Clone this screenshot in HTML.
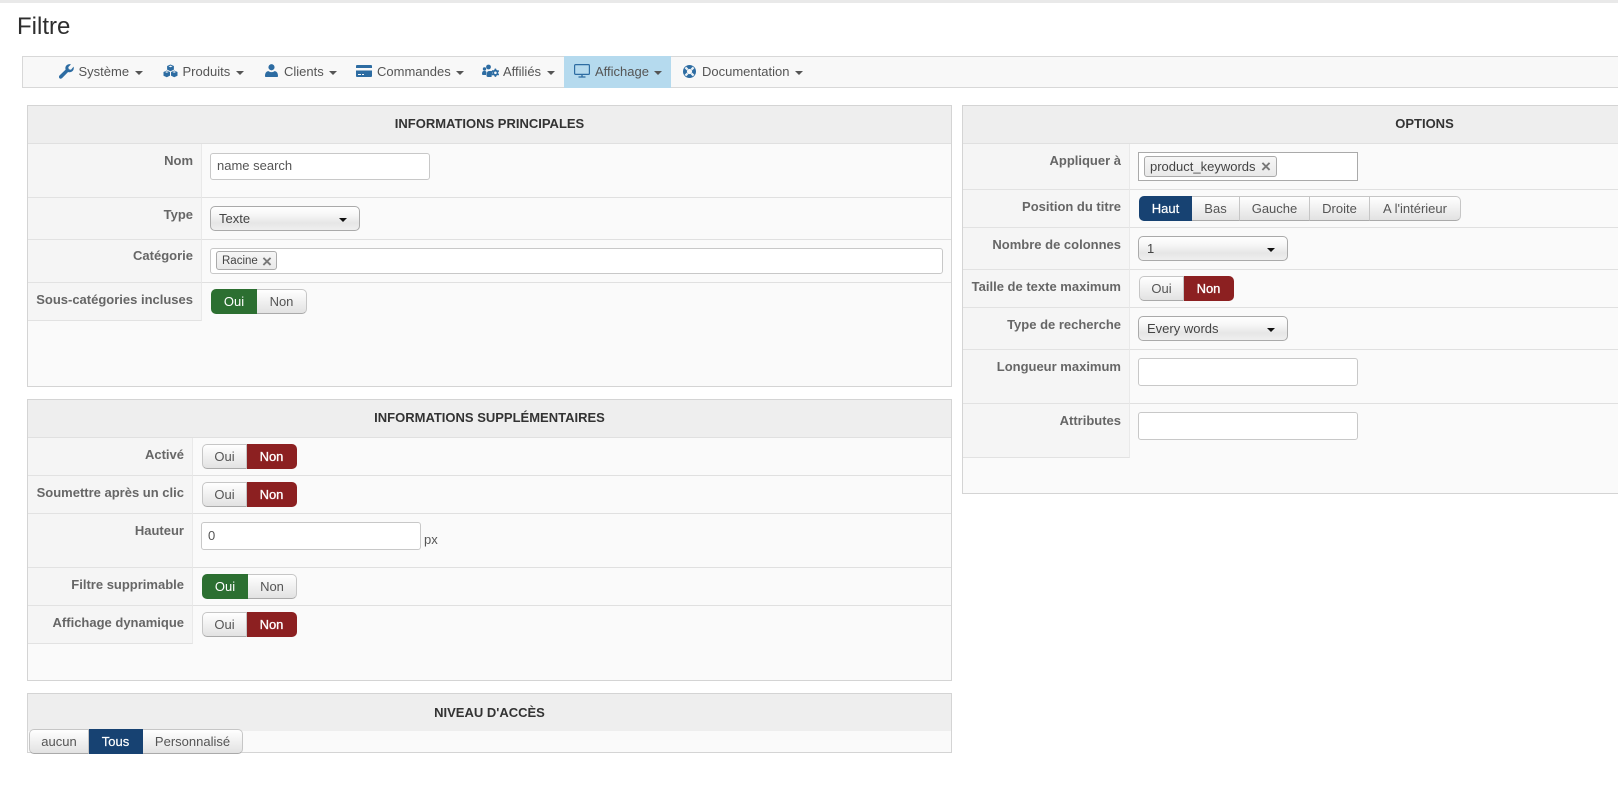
<!DOCTYPE html>
<html lang="fr"><head><meta charset="utf-8"><title>Filtre</title>
<style>
*{box-sizing:border-box}
html,body{margin:0;padding:0;width:1618px;height:790px;overflow:hidden;background:#fff}
body{position:relative;font-family:"Liberation Sans",Arial,sans-serif;font-size:13px;color:#555}
.panel{background:#fafafa;border:1px solid #d4d4d4;overflow:hidden}
.head{position:absolute;background:#eeeeee;border-bottom:1px solid #e0e0e0;font-weight:bold;font-size:13px;color:#333;text-align:center;left:0;right:0;top:0}
.lab{position:absolute;background:#f5f5f5;border-right:1px solid #e9e9e9;border-bottom:1px solid #e2e2e2}
.line{position:absolute;height:1px;background:#e0e0e0}
.l{position:absolute;font-weight:bold;color:#666;text-align:right;font-size:13px;line-height:16px;white-space:nowrap}
.inp{position:absolute;background:#fff;border:1px solid #c8c8c8;border-radius:3px;color:#555;line-height:26px;padding-left:6px;font-size:13px}
.sel{position:absolute;border:1px solid #aaa;border-radius:5px;background:linear-gradient(#fff 0,#f6f6f6 35%,#e6e6e6 70%,#efefef 100%);color:#444;height:25px;line-height:23px;padding-left:8px;font-size:13px}
.sel i{position:absolute;right:12px;top:11px;width:0;height:0;border:4px solid transparent;border-top-color:#111;border-bottom:0}
.b{position:absolute;height:25px;line-height:23px;text-align:center;font-size:13px;color:#555;background:linear-gradient(#fff,#e2e2e2);border:1px solid #c6c6c6;border-bottom-color:#aaa;border-left-width:0}
.b.f{border-left-width:1px;border-radius:5px 0 0 5px}
.b.e{border-radius:0 5px 5px 0}
.g{background:#2c6f31;border-color:#2c6f31;color:#fff}
.r{background:#8c2021;border-color:#8c2021;color:#fff;-webkit-text-stroke:.3px #fff}
.n{background:#174272;border-color:#174272;color:#fff;-webkit-text-stroke:.2px #fff}
.tag{position:absolute;border:1px solid #aaa;border-radius:3px;background:linear-gradient(#f6f6f6,#e9e9e9);color:#444;white-space:nowrap}
.nav{position:absolute;font-size:13px;color:#555;line-height:16px;top:64px;white-space:nowrap}
.c{position:absolute;top:71px;width:0;height:0;border:4px solid transparent;border-top-color:#555;border-bottom:0}
svg.ic{position:absolute;fill:#2d6ca2}
</style></head><body>
<div style="position:absolute;left:0;top:0;width:1618px;height:3px;background:#e9e9e9"></div>
<div style="position:absolute;left:17px;top:13px;font-size:24px;line-height:28px;color:#2e2e2e">Filtre</div>

<!-- NAV -->
<div style="position:absolute;left:22px;top:56px;width:1600px;height:32px;background:#f8f8f8;border:1px solid #d8d8d8"></div>
<div style="position:absolute;left:564px;top:56px;width:107px;height:32px;background:#b5daee"></div>

<svg class="ic" style="left:59px;top:63px" width="15" height="16" viewBox="0 0 15 16"><path d="M14.6 3.6c.5 1.8 0 3.6-1.3 4.7-1.2 1-2.8 1.2-4.2.7L3.2 15c-.9.9-2.1.9-2.8.1-.7-.8-.6-1.9.2-2.7l6-5.8c-.5-1.5-.2-3.1.9-4.2C8.600 1.300 10.400.8 12 1.400L9.300 4.100l.5 2.200 2.200.5z"/></svg>
<div class="nav" style="left:78.500px">Système</div><div class="c" style="left:135px"></div>

<svg class="ic" style="left:163px;top:64px" width="15" height="14" viewBox="0 0 15 14"><path d="M7.500 0.500l3.400 1.500v3.600L7.500 7.200 4.100 5.600V2zM3.800 6.500l3.200 1.500v3.600l-3.200 1.700L.5 11.700V8zM11.200 6.500l3.300 1.500v3.700l-3.300 1.600L8 11.600V8z"/><path fill="#f8f8f8" d="M5.500 2.400l2-.8 2 .8-2 .8zM2 8l1.800-.8 1.800.8-1.800.8zM9.400 8l1.800-.8 1.800.8-1.800.8z"/></svg>
<div class="nav" style="left:182.500px">Produits</div><div class="c" style="left:236px"></div>

<svg class="ic" style="left:265px;top:64px" width="13" height="13" viewBox="0 0 14 14"><circle cx="7" cy="3.500" r="3.300"/><path d="M1 14c-.7 0-1-.5-1-1.100C0 10 1.300 7.700 3.800 7.700c1 .8 2 1.100 3.200 1.100s2.200-.3 3.200-1.100c2.500 0 3.800 2.300 3.800 5.200 0 .6-.3 1.100-1 1.100z"/></svg>
<div class="nav" style="left:284px">Clients</div><div class="c" style="left:329px"></div>

<svg class="ic" style="left:356px;top:65px" width="16" height="12" viewBox="0 0 16 12"><path d="M1 0h14a1 1 0 0 1 1 1v2H0V1a1 1 0 0 1 1-1zM0 5.500h16V11a1 1 0 0 1-1 1H1a1 1 0 0 1-1-1zM2 9v1h3V9zM6 9v1h2V9z" fill-rule="evenodd"/></svg>
<div class="nav" style="left:377px">Commandes</div><div class="c" style="left:456px"></div>

<svg class="ic" style="left:482px;top:64px" width="17" height="14" viewBox="0 0 17 14"><circle cx="2.500" cy="5" r="1.700"/><circle cx="6.500" cy="3" r="2.400"/><path d="M0 10c0-2 .6-3 1.500-3h2l1 1L4 11H1c-.6 0-1-.4-1-1zM4.500 11.500c0-2.800 1-4.500 2.500-4.500h2c.6 0 1 .3 1.300.7L9.500 13H6c-1 0-1.500-.6-1.500-1.500z"/><path fill-rule="evenodd" d="M12.800 4.500l1.300.1.300 1.200 1.100.6 1.100-.3.500 1.300-.9.700v1.300l.9.800-.5 1.200-1.100-.3-1.100.6-.3 1.200h-1.300l-.4-1.200-1.100-.6-1.100.3-.6-1.200.9-.8V8.100l-.9-.7.6-1.300 1.100.3 1.100-.6zm.6 3a1.300 1.300 0 1 0 .01 2.600 1.300 1.300 0 0 0-.01-2.600z"/></svg>
<div class="nav" style="left:503px">Affiliés</div><div class="c" style="left:547px"></div>

<svg class="ic" style="left:574px;top:64px;fill:none;stroke:#2d6ca2" width="16" height="14" viewBox="0 0 16 14"><rect x=".6" y=".6" width="14.800" height="9.800" rx="1" stroke-width="1.200"/><path d="M8 10.500v2M4.500 13h7" stroke-width="1.300"/></svg>
<div class="nav" style="left:595px">Affichage</div><div class="c" style="left:654px"></div>

<svg class="ic" style="left:683px;top:65px" width="13" height="13" viewBox="0 0 14 14"><circle cx="7" cy="7" r="7"/><path stroke="#e8f0f6" stroke-width="2.400" d="M2.600 2.600l2.300 2.300M11.400 2.600L9.100 4.900M2.600 11.400l2.300-2.300M11.400 11.400L9.100 9.100"/><circle cx="7" cy="7" r="2.800" fill="#f8f8f8"/></svg>
<div class="nav" style="left:702px">Documentation</div><div class="c" style="left:795px"></div>

<!-- PANEL 1 -->
<div class="panel" style="position:absolute;left:27px;top:105px;width:925px;height:282px">
  <div class="head" style="height:38px;line-height:36px">INFORMATIONS PRINCIPALES</div>
</div>
<div class="lab" style="left:28px;top:144px;width:174px;height:54px"></div>
<div class="lab" style="left:28px;top:198px;width:174px;height:42px"></div>
<div class="lab" style="left:28px;top:240px;width:174px;height:43px"></div>
<div class="lab" style="left:28px;top:283px;width:174px;height:38px"></div>
<div class="line" style="left:202px;top:197px;width:749px"></div>
<div class="line" style="left:202px;top:239px;width:749px"></div>
<div class="line" style="left:202px;top:282px;width:749px"></div>
<div class="l" style="right:1425px;top:153px">Nom</div>
<div class="l" style="right:1425px;top:207px">Type</div>
<div class="l" style="right:1425px;top:248px">Catégorie</div>
<div class="l" style="right:1425px;top:292px">Sous-catégories incluses</div>
<div class="inp" style="left:210px;top:153px;width:220px;height:27px;line-height:24px">name search</div>
<div class="sel" style="left:210px;top:206px;width:150px">Texte<i></i></div>
<div class="inp" style="left:210px;top:248px;width:733px;height:26px"></div>
<div class="tag" style="left:216px;top:251px;width:61px;height:19px;font-size:11.500px;line-height:18px;padding-left:5px">Racine</div>
<div style="position:absolute;left:262px;top:252px;font-size:17px;line-height:19px;color:#777;font-weight:bold">×</div>
<div class="b f g" style="left:211px;top:289px;width:46px">Oui</div>
<div class="b e" style="left:257px;top:289px;width:50px">Non</div>

<!-- PANEL 2 -->
<div class="panel" style="position:absolute;left:27px;top:399px;width:925px;height:282px">
  <div class="head" style="height:38px;line-height:36px">INFORMATIONS SUPPLÉMENTAIRES</div>
</div>
<div class="lab" style="left:28px;top:438px;width:165px;height:38px"></div>
<div class="lab" style="left:28px;top:476px;width:165px;height:38px"></div>
<div class="lab" style="left:28px;top:514px;width:165px;height:54px"></div>
<div class="lab" style="left:28px;top:568px;width:165px;height:38px"></div>
<div class="lab" style="left:28px;top:606px;width:165px;height:38px"></div>
<div class="line" style="left:193px;top:475px;width:758px"></div>
<div class="line" style="left:193px;top:513px;width:758px"></div>
<div class="line" style="left:193px;top:567px;width:758px"></div>
<div class="line" style="left:193px;top:605px;width:758px"></div>
<div class="l" style="right:1434px;top:447px">Activé</div>
<div class="l" style="right:1434px;top:485px">Soumettre après un clic</div>
<div class="l" style="right:1434px;top:523px">Hauteur</div>
<div class="l" style="right:1434px;top:577px">Filtre supprimable</div>
<div class="l" style="right:1434px;top:615px">Affichage dynamique</div>
<div class="b f" style="left:202px;top:444px;width:45px">Oui</div>
<div class="b e r" style="left:247px;top:444px;width:50px">Non</div>
<div class="b f" style="left:202px;top:482px;width:45px">Oui</div>
<div class="b e r" style="left:247px;top:482px;width:50px">Non</div>
<div class="inp" style="left:201px;top:522px;width:220px;height:28px">0</div>
<div style="position:absolute;left:424px;top:532px;line-height:16px">px</div>
<div class="b f g" style="left:202px;top:574px;width:46px">Oui</div>
<div class="b e" style="left:248px;top:574px;width:49px">Non</div>
<div class="b f" style="left:202px;top:612px;width:45px">Oui</div>
<div class="b e r" style="left:247px;top:612px;width:50px">Non</div>

<!-- PANEL 3 -->
<div class="panel" style="position:absolute;left:27px;top:693px;width:925px;height:60px">
  <div class="head" style="height:37px;line-height:37px;border-bottom:0">NIVEAU D'ACCÈS</div>
</div>
<div class="b f" style="left:29px;top:729px;width:60px">aucun</div>
<div class="b n" style="left:89px;top:729px;width:54px">Tous</div>
<div class="b e" style="left:143px;top:729px;width:100px">Personnalisé</div>

<!-- PANEL 4 -->
<div class="panel" style="position:absolute;left:962px;top:105px;width:925px;height:389px">
  <div class="head" style="height:38px;line-height:36px">OPTIONS</div>
</div>
<div class="lab" style="left:963px;top:144px;width:167px;height:46px"></div>
<div class="lab" style="left:963px;top:190px;width:167px;height:38px"></div>
<div class="lab" style="left:963px;top:228px;width:167px;height:42px"></div>
<div class="lab" style="left:963px;top:270px;width:167px;height:38px"></div>
<div class="lab" style="left:963px;top:308px;width:167px;height:42px"></div>
<div class="lab" style="left:963px;top:350px;width:167px;height:54px"></div>
<div class="lab" style="left:963px;top:404px;width:167px;height:54px"></div>
<div class="line" style="left:1130px;top:189px;width:488px"></div>
<div class="line" style="left:1130px;top:227px;width:488px"></div>
<div class="line" style="left:1130px;top:269px;width:488px"></div>
<div class="line" style="left:1130px;top:307px;width:488px"></div>
<div class="line" style="left:1130px;top:349px;width:488px"></div>
<div class="line" style="left:1130px;top:403px;width:488px"></div>
<div class="l" style="right:497px;top:153px">Appliquer à</div>
<div class="l" style="right:497px;top:199px">Position du titre</div>
<div class="l" style="right:497px;top:237px">Nombre de colonnes</div>
<div class="l" style="right:497px;top:279px">Taille de texte maximum</div>
<div class="l" style="right:497px;top:317px">Type de recherche</div>
<div class="l" style="right:497px;top:359px">Longueur maximum</div>
<div class="l" style="right:497px;top:413px">Attributes</div>
<div class="inp" style="left:1138px;top:152px;width:220px;height:29px;border-radius:0;border-color:#aaa"></div>
<div class="tag" style="left:1144px;top:156px;width:133px;height:21px;font-size:13px;line-height:19px;padding-left:5px">product_keywords</div>
<div style="position:absolute;left:1261px;top:157px;font-size:17px;line-height:19px;color:#777;font-weight:bold">×</div>
<div class="b f n" style="left:1139px;top:196px;width:53px">Haut</div>
<div class="b" style="left:1192px;top:196px;width:48px">Bas</div>
<div class="b" style="left:1240px;top:196px;width:70px">Gauche</div>
<div class="b" style="left:1310px;top:196px;width:60px">Droite</div>
<div class="b e" style="left:1370px;top:196px;width:91px">A l'intérieur</div>
<div class="sel" style="left:1138px;top:236px;width:150px">1<i></i></div>
<div class="b f" style="left:1139px;top:276px;width:45px">Oui</div>
<div class="b e r" style="left:1184px;top:276px;width:50px">Non</div>
<div class="sel" style="left:1138px;top:316px;width:150px">Every words<i></i></div>
<div class="inp" style="left:1138px;top:358px;width:220px;height:28px"></div>
<div class="inp" style="left:1138px;top:412px;width:220px;height:28px"></div>
</body></html>
